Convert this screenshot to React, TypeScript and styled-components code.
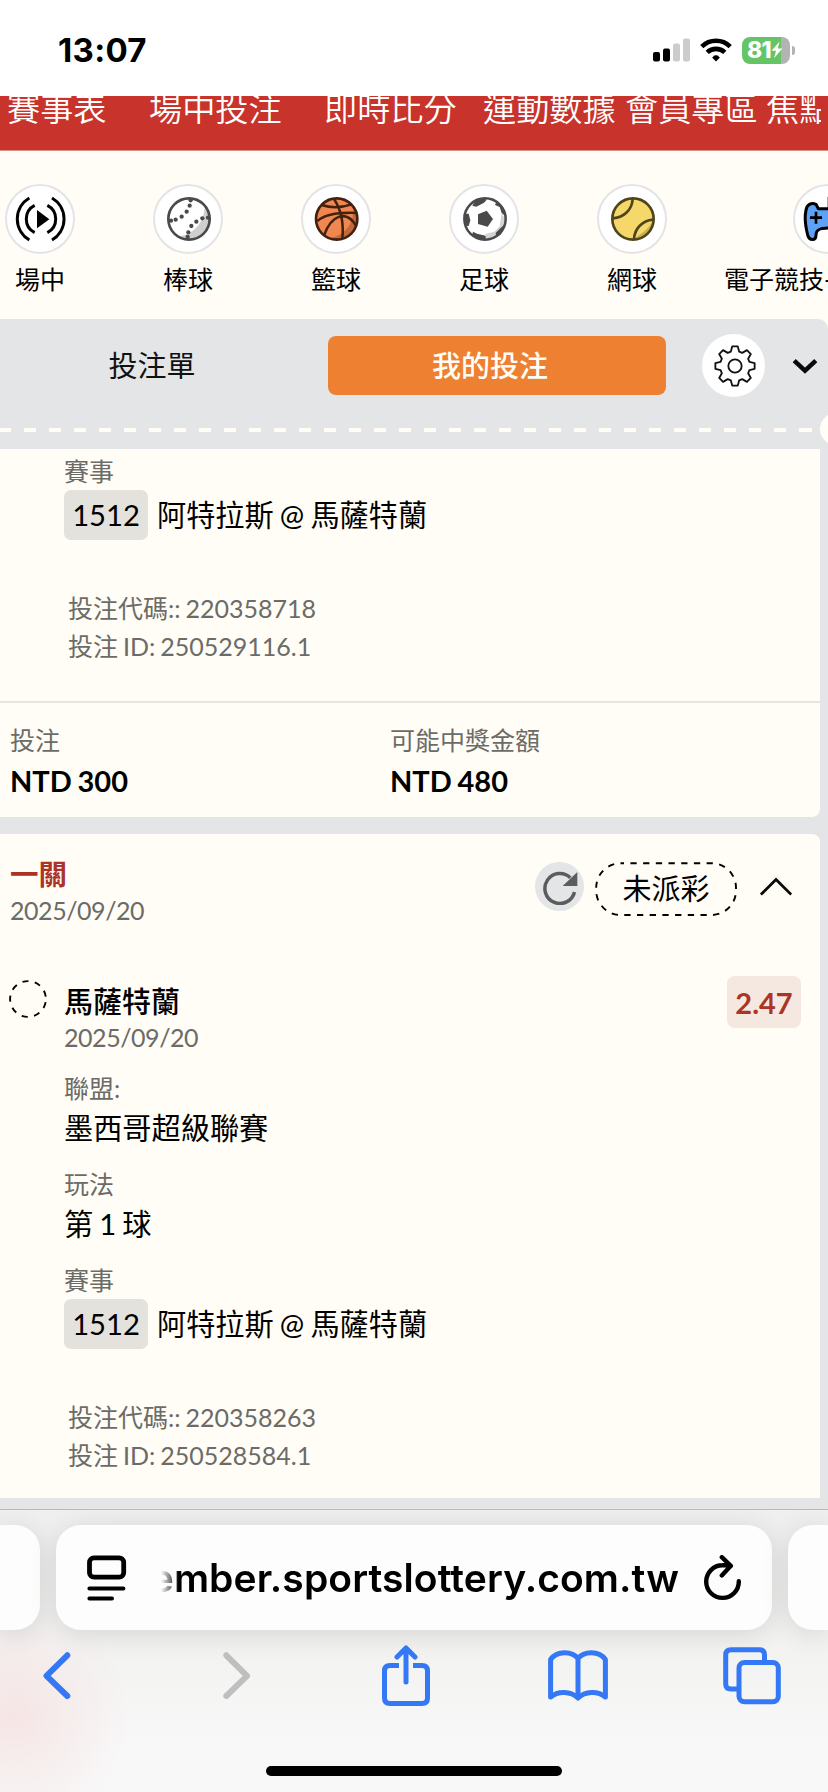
import { ReactNode } from 'react';
import styled, { createGlobalStyle } from 'styled-components';

const sans = `Lato, 'Noto Sans CJK TC', sans-serif`;

const GlobalStyle = createGlobalStyle`
  * {
    box-sizing: border-box;
  }

  body {
    margin: 0;
    background: #fffdf6;
    font-family: ${sans};
    word-spacing: -0.085em;
  }

  svg {
    display: block;
    flex-shrink: 0;
  }
`;

// ---------------------------------------------
// icons
// ---------------------------------------------
const SignalIcon = () => (
  <svg width="37" height="24" viewBox="0 0 37 24">
    <rect x="0" y="14" width="7" height="9.5" rx="2" />
    <rect x="10" y="10.5" width="7" height="13" rx="2" />
    <rect x="20" y="5.5" width="7" height="18" rx="2" fill="#ccc" />
    <rect x="30" y="0.5" width="7" height="23" rx="2" fill="#ccc" />
  </svg>
);

const WifiIcon = () => (
  <svg width="32" height="24" viewBox="0 0 32 24" fill="none" stroke="#000" strokeWidth="4.6">
    <path d="M1.8 8.6A20.3 20.3 0 0 1 30.2 8.6" />
    <path d="M7.2 14.4A12.8 12.8 0 0 1 24.8 14.4" />
    <path d="M12.1 19.4A5.9 5.9 0 0 1 19.9 19.4L16 23.4Z" fill="#000" stroke="none" />
    <path d="M14 19.4A4 4 0 0 1 18 19.4" strokeWidth="3" />
  </svg>
);

const BoltIcon = () => (
  <svg width="12" height="18" viewBox="0 0 12 18" fill="#fff">
    <path d="M8.6 0.6L0.6 9.8H5L3 17.2L11.4 7.6H6.8Z" />
  </svg>
);

const LiveIcon = () => (
  <svg width="66" height="66" viewBox="-99 -99 198 198" fill="none" stroke="#000" strokeWidth="9">
    <path d="M-32 -63A73 73 0 0 0 -32 63M-16 -41A46 46 0 0 0 -16 41M36 -63A73 73 0 0 1 36 63M22 -41A46 46 0 0 1 22 41" />
    <path d="M-9 -27V28L28 0.5Z" fill="#000" stroke="none" />
  </svg>
);

const seams = [
  [5, -56],
  [2, -40],
  [-7, -22],
  [-22, -7],
  [-40, 2],
  [-54, 5],
  [57, -4],
  [40, -2],
  [22, 8],
  [7, 21],
  [-2, 40],
  [-4, 54],
];

const BaseballIcon = () => (
  <svg width="66" height="66" viewBox="-102 -99 198 198">
    <circle r="62" fill="#fff" />
    <path d="M46 -42A62 62 0 0 1 -34 52C10 50 50 10 46 -42Z" fill="#cfcfcf" />
    {seams.map(([cx, cy]) => (
      <circle key={`${cx},${cy}`} cx={cx} cy={cy} r="6.4" fill="#4a4a4a" />
    ))}
    <circle r="62" fill="none" stroke="#4a4a4a" strokeWidth="8" />
  </svg>
);

const BasketballIcon = () => (
  <svg width="66" height="66" viewBox="-101 -99 198 198">
    <circle r="62" fill="#f08650" />
    <path d="M50 -34A62 62 0 0 1 -20 58C30 46 52 10 50 -34Z" fill="#c26a3e" />
    <g fill="none" stroke="#42220f" strokeWidth="7.5">
      <path d="M-45 -42C-15 -32 15 -34 45 -44" />
      <path d="M-8 -60C12 -30 22 10 17 59" />
      <path d="M-58 6C-30 -18 15 -20 62 -18" />
      <path d="M-38 50C-18 -10 28 -30 58 20" />
      <circle r="62" strokeWidth="8" />
    </g>
  </svg>
);

const FootballIcon = () => (
  <svg width="66" height="66" viewBox="-102 -99 198 198">
    <circle r="62" fill="#fff" />
    <path d="M50 -20L44 22L28 38L2 44L2 60L44 50L62 6Z" fill="#d4d4d4" />
    <g fill="#4a4a4a">
      <path d="M-21 -14L5 -25L24 0L8 23L-21 15Z" />
      <path d="M-38 -40L-30 -54L0 -64L4 -56L-4 -48L-26 -37Z" />
      <path d="M30 -42L34 -52L60 -24L62 -8L50 -18L44 -36Z" />
      <path d="M57 18L64 14L48 46L34 54L32 42L46 28Z" />
      <path d="M-36 38L-24 44L2 50L2 64L-26 60L-38 46Z" />
      <path d="M-64 -16L-49 -16L-44 4L-49 21L-60 20Z" />
    </g>
    <circle r="62" fill="none" stroke="#4a4a4a" strokeWidth="7.5" />
  </svg>
);

const TennisIcon = () => (
  <svg width="66" height="66" viewBox="-102 -99 198 198">
    <circle r="62" fill="#f6d76a" />
    <path d="M60 2A62 62 0 0 1 4 60C14 48 48 34 60 2Z" fill="#c9b055" />
    <g fill="none" stroke="#4d461c" strokeWidth="8">
      <path d="M-1 -60C-3 -28 -26 -5 -60 -2" />
      <path d="M3 60C5 28 28 5 60 2" />
      <circle r="62" />
    </g>
  </svg>
);

const GamepadIcon = () => (
  <svg width="66" height="66" viewBox="-99 -99 198 198" strokeLinejoin="round">
    <path
      d="M-29 -31L-36 -44C-50 -50 -64 -44 -66 -26C-70 -10 -68 20 -61 48C-56 66 -36 66 -36 48C-36 34 -28 27 0 27C28 27 36 34 36 48C36 66 56 66 61 48C68 20 70 -10 66 -26C64 -44 50 -50 36 -44L29 -31Z"
      fill="#5ea2f8"
      stroke="#000"
      strokeWidth="9"
    />
    <path d="M3 -66V-30M-54 -4H-18M-36 -22V14" stroke="#000" strokeWidth="8" />
  </svg>
);

function gearPath(teeth: number, tip: number, base: number) {
  const points: string[] = [];
  const at = (r: number, deg: number) => {
    const a = (deg * Math.PI) / 180;
    return `${(r * Math.sin(a)).toFixed(1)} ${(-r * Math.cos(a)).toFixed(1)}`;
  };
  for (let i = 0; i < teeth; i++) {
    const c = (360 / teeth) * i;
    points.push(at(base, c - 16), at(tip, c - 8), at(tip, c + 8), at(base, c + 16));
  }
  return `M${points.join('L')}Z`;
}

const GearIcon = () => (
  <svg width="44" height="44" viewBox="-66 -66 132 132" fill="none" stroke="#111" strokeWidth="5.5" strokeLinejoin="round">
    <path d={gearPath(8, 59.5, 45)} />
    <circle r="20" />
  </svg>
);

const ChevronDownIcon = () => (
  <svg width="26" height="16" viewBox="0 0 26 16" fill="none" stroke="#0a0a0a" strokeWidth="4.5">
    <path d="M2.2 2.6L13 12.6L23.8 2.6" />
  </svg>
);

const ChevronUpIcon = () => (
  <svg width="32" height="20" viewBox="0 0 32 20" fill="none" stroke="#0a0a0a" strokeWidth="2.8">
    <path d="M0.8 17.6L16 2.4L31.2 17.6" />
  </svg>
);

const RetryIcon = () => (
  <svg width="36" height="36" viewBox="-54 -54 108 108">
    <path d="M43.5 15A45 45 0 1 1 31 -28" fill="none" stroke="#5b5c5e" strokeWidth="10.5" />
    <path d="M52 -45V-3H8Z" fill="#5b5c5e" />
  </svg>
);

const PendingIcon = () => (
  <svg width="38" height="38" viewBox="-19 -19 38 38">
    <circle r="17.9" fill="none" stroke="#000" strokeWidth="1.9" strokeDasharray="6.1 6.4" strokeDashoffset="-3.2" />
  </svg>
);

const PageMenuIcon = () => (
  <svg width="40" height="46" viewBox="0 0 40 46" fill="none" stroke="#000" strokeLinecap="round">
    <rect x="2.5" y="2.8" width="34.2" height="19.4" rx="4.5" strokeWidth="4.8" />
    <path d="M2.4 33.5H36.4M2.4 43.6H25" strokeWidth="4" />
  </svg>
);

const ReloadIcon = () => (
  <svg width="38" height="46" viewBox="0 0 38 46" fill="none" stroke="#000" strokeWidth="4.4" strokeLinecap="round" strokeLinejoin="round">
    <path d="M34.8 26.3A16.3 16.3 0 1 1 18.5 10.3C22 10.2 24.5 10.4 26.5 11" />
    <path d="M17.8 2.2L26.8 10.8L17.8 20.4" />
  </svg>
);

const BackIcon = () => (
  <svg width="28" height="48" viewBox="0 0 28 48" fill="none" stroke="currentColor" strokeWidth="6" strokeLinecap="round" strokeLinejoin="round">
    <path d="M24.3 3.3L3.5 23.8L24.3 44" />
  </svg>
);

const ForwardIcon = () => (
  <svg width="40" height="48" viewBox="-12 0 40 48" fill="none" stroke="currentColor" strokeWidth="6" strokeLinecap="round" strokeLinejoin="round">
    <path d="M3.3 3.3L24 23.8L3.3 44" />
  </svg>
);

const ShareIcon = () => (
  <svg width="50" height="62" viewBox="-2 0 50 62" fill="none" stroke="currentColor" strokeWidth="5">
    <path d="M17 20.5H8Q2.5 20.5 2.5 26V53Q2.5 58.5 8 58.5H40Q45.5 58.5 45.5 53V26Q45.5 20.5 40 20.5H31" />
    <path d="M24 3.5V37M15 12L24 3L33 12" strokeLinecap="round" strokeLinejoin="round" />
  </svg>
);

const BookIcon = () => (
  <svg width="60" height="52" viewBox="0 0 60 52" fill="none" stroke="currentColor" strokeWidth="5" strokeLinejoin="round">
    <path d="M30 48V8.5C24 1 9 0.5 2.6 9.5V47C10 40.5 23 41 30 48ZM30 8.5C36 1 51 0.5 57.4 9.5V47C50 40.5 37 41 30 48" />
  </svg>
);

const TabsIcon = () => (
  <svg width="58" height="58" viewBox="0 0 58 58" fill="none" stroke="currentColor" strokeWidth="5">
    <path d="M41.5 15V8Q41.5 2.8 36.5 2.8H8Q2.7 2.8 2.7 8V37Q2.7 42 8 42H15" />
    <rect x="16" y="15.5" width="39.3" height="39.3" rx="5.5" />
  </svg>
);

// ---------------------------------------------
// status bar
// ---------------------------------------------
const Screen = styled.div`
  display: flex;
  flex-direction: column;
  width: 828px;
  height: 1792px;
  overflow: hidden;
  background: #fffdf6;
  color: #000;
`;

const StatusBar = styled.div`
  display: flex;
  align-items: center;
  height: 96px;
  padding: 4px 33px 0 58px;
  background: #fff;
`;

const Clock = styled.span`
  flex: 1;
  font: 700 33px/36px Inter, sans-serif;
  letter-spacing: 0.3px;
`;

const StatusIcons = styled.div`
  display: flex;
  align-items: center;
  gap: 10px;
`;

const Battery = styled.div`
  display: flex;
  align-items: center;
  gap: 2px;

  &::after {
    content: '';
    width: 3px;
    height: 9px;
    border-radius: 0 4px 4px 0;
    background: #b3b3b3;
  }
`;

const BatteryBody = styled.div`
  display: flex;
  align-items: center;
  width: 48px;
  height: 27px;
  padding-left: 5px;
  border-radius: 8px;
  background: linear-gradient(90deg, #65c466 39px, #b3b3b3 39px);
  color: #fff;
  font: 800 23px/27px Inter, sans-serif;
  letter-spacing: -0.8px;
`;

// ---------------------------------------------
// site navigation
// ---------------------------------------------
const SiteNav = styled.nav`
  display: flex;
  height: 55px;
  padding-left: 7px;
  overflow: hidden;
  border-bottom: 1px solid #e08e86;
  background: #c8332b;
  color: #fff;
  font-size: 33.2px;
  font-weight: 350;
  line-height: 40px;
  white-space: nowrap;
`;

const NavItem = styled.span<{ $width: number }>`
  flex: 0 0 ${({ $width }) => $width}px;
  height: 54px;
  margin-top: -8px;
  overflow: hidden;
`;

const Sports = styled.div`
  display: flex;
  gap: 78px;
  height: 168px;
  padding: 33px 0 0 5px;
`;

const Sport = styled.div<{ $wide?: boolean }>`
  display: flex;
  flex-direction: column;
  align-items: center;
  flex: 0 0 ${({ $wide }) => ($wide ? 207 : 70)}px;
  gap: 10px;
  margin-left: ${({ $wide }) => ($wide ? -21 : 0)}px;
  font-size: 25px;
  line-height: 30px;
  white-space: nowrap;
`;

const SportCircle = styled.div`
  width: 70px;
  height: 70px;
  border: 2px solid #e4e4e6;
  border-radius: 50%;
  background: #fff;
`;

const SportName = styled.span<{ $wide?: boolean }>`
  align-self: ${({ $wide }) => ($wide ? 'flex-start' : 'center')};
`;

// ---------------------------------------------
// bet slip
// ---------------------------------------------
const Slip = styled.section`
  flex: 1;
  min-height: 0;
  overflow: hidden;
  border-top-right-radius: 10px;
  background: #e4e5e7;
`;

const Tabs = styled.div`
  display: flex;
  align-items: center;
  height: 93px;
  padding-right: 10px;
`;

const Tab = styled.button<{ $active?: boolean }>`
  width: ${({ $active }) => ($active ? 338 : 304)}px;
  height: 59px;
  margin-right: ${({ $active }) => ($active ? 36 : 24)}px;
  padding: 0 ${({ $active }) => ($active ? 14 : 0)}px 0 0;
  border: 0;
  border-radius: 8px;
  background: ${({ $active }) => ($active ? '#ee8131' : 'transparent')};
  color: ${({ $active }) => ($active ? '#fffdf6' : '#111')};
  font: ${({ $active }) => ($active ? 500 : 400)} 29px/59px ${sans};
`;

const SettingsButton = styled.button`
  display: flex;
  align-items: center;
  justify-content: center;
  width: 63px;
  height: 63px;
  margin-right: 27px;
  padding: 0 0 0 2px;
  border: 0;
  border-radius: 50%;
  background: #fff;
`;

const TearLine = styled.div`
  display: flex;
  align-items: center;
  justify-content: space-between;
  height: 37px;
  padding-bottom: 1px;
  overflow: hidden;

  &::before {
    content: '';
    width: 812px;
    height: 4px;
    background: repeating-linear-gradient(90deg, #fffdf6 0 12.5px, transparent 12.5px 25px) -1px 0;
  }

  &::after {
    content: '';
    width: 32px;
    height: 32px;
    margin: -3px -24px 0 0;
    border-radius: 50%;
    background: #fffdf6;
  }
`;

const Card = styled.article<{ $cut: 'top' | 'bottom' }>`
  width: 820px;
  margin-bottom: 17px;
  padding-top: ${({ $cut }) => ($cut === 'top' ? 3 : 0)}px;
  border-radius: ${({ $cut }) => ($cut === 'top' ? '0 0 8px 0' : '0 8px 0 0')};
  background: #fffdf6;
`;

const CardHeader = styled.header`
  display: flex;
  align-items: flex-start;
  height: 149px;
  padding: 22px 28px 0 10px;
`;

const Heading = styled.div`
  flex: 1;
`;

const BetType = styled.h2`
  margin: 0;
  color: #ab3427;
  font-size: 28.5px;
  font-weight: 700;
  line-height: 37px;
`;

const DateText = styled.div`
  color: #6b6b68;
  font-size: 25px;
  letter-spacing: -0.45px;
  line-height: 34px;
`;

const RetryButton = styled.button`
  display: flex;
  align-items: center;
  justify-content: center;
  width: 49px;
  height: 49px;
  margin: 6px 11px 0 0;
  padding: 0;
  border: 0;
  border-radius: 50%;
  background: #e4e5e7;
`;

const Status = styled.div`
  position: relative;
  width: 142px;
  height: 54px;
  margin: 6px 23px 0 0;
  font-size: 29px;
  line-height: 54px;
  text-align: center;

  svg {
    position: absolute;
    inset: 0;
  }
`;

const ToggleButton = styled.button`
  padding: 0;
  margin-top: 21px;
  border: 0;
  background: none;
`;

const Selection = styled.div`
  display: flex;
  align-items: flex-start;
  height: 86px;
  padding: 0 19px 0 9px;
`;

const SelectionText = styled.div`
  flex: 1;
  padding-left: 17px;

  ${DateText} {
    line-height: 35px;
  }
`;

const PendingMark = styled.div`
  margin-top: -3px;
`;

const SelectionName = styled.div`
  font-size: 29px;
  font-weight: 500;
  line-height: 37px;
`;

const Odds = styled.div`
  width: 74px;
  height: 52px;
  margin-top: -7px;
  border-radius: 8px;
  background: #f4e8e0;
  color: #ab3427;
  font-size: 29px;
  font-weight: 700;
  line-height: 53px;
  text-align: center;
`;

const Fields = styled.dl`
  margin: 0;
  padding-left: 64px;
`;

const Label = styled.dt`
  color: #6b6b68;
  font-size: 25px;
  line-height: 38px;
`;

const Value = styled.dd`
  height: 58px;
  margin: 0;
  font-size: 29.2px;
  line-height: 42px;
`;

const Match = styled.dd`
  display: flex;
  gap: 9px;
  margin: 0;
  font-size: 29.2px;
  line-height: 50px;
`;

const MatchNumber = styled.span`
  width: 84px;
  border-radius: 7px;
  background: #e4e2dd;
  text-align: center;
`;

const Codes = styled.div<{ $bottom: number }>`
  padding: 50px 0 ${({ $bottom }) => $bottom}px 68px;
  color: #6b6b68;
  font-size: 25px;
  line-height: 37.5px;
`;

const Totals = styled.footer`
  display: grid;
  grid-template-columns: 380px 1fr;
  padding: 18px 0 15px 10px;
  border-top: 2px solid #e5e6e3;
`;

const TotalLabel = styled.div`
  color: #6b6b68;
  font-size: 25px;
  line-height: 38px;
`;

const Amount = styled.div`
  font-size: 29px;
  font-weight: 700;
  line-height: 43px;
`;

// ---------------------------------------------
// browser chrome
// ---------------------------------------------
const Browser = styled.div`
  display: flex;
  flex-direction: column;
  height: 283px;
  overflow: hidden;
  border-top: 1px solid #b9bab9;
  background:
    radial-gradient(circle at 14px 206px, #f6e5e5 0, rgba(246, 229, 229, 0) 115px),
    linear-gradient(#efefef, #f3f3f2 150px, #f8f8f8 240px);
`;

const AddressRow = styled.div`
  display: flex;
  gap: 16px;
  height: 121px;
  padding-top: 15px;
`;

const AddressBar = styled.div`
  display: flex;
  align-items: center;
  flex: 0 0 716px;
  height: 105px;
  padding: 0 29px 0 31px;
  border-radius: 25px;
  background: #fdfdfd;
  box-shadow: 0 4px 28px rgba(0, 0, 0, 0.12);
`;

const SideTab = styled.div<{ $side: 'left' | 'right' }>`
  flex: 0 0 40px;
  height: 105px;
  border-radius: ${({ $side }) => ($side === 'left' ? '0 25px 25px 0' : '25px 0 0 25px')};
  background: #fdfdfd;
  box-shadow: 0 4px 28px rgba(0, 0, 0, 0.12);
`;

const Url = styled.div`
  display: flex;
  justify-content: flex-end;
  width: 518px;
  margin: 0 25px 0 34px;
  overflow: hidden;
  font: 600 39px/60px Inter, sans-serif;
  letter-spacing: 0.1px;
  mask-image: linear-gradient(90deg, transparent, #000 18px);
`;

const Toolbar = styled.div`
  display: flex;
  align-items: center;
  justify-content: space-between;
  height: 62px;
  margin-top: 14px;
  padding: 0 47px 0 28px;
  color: #3478f6;
`;

const ToolButton = styled.span<{ $disabled?: boolean }>`
  display: flex;
  justify-content: center;
  width: 58px;
  color: ${({ $disabled }) => ($disabled ? '#bfbfbf' : 'inherit')};
`;

const HomeIndicator = styled.div`
  width: 296px;
  height: 10px;
  margin: 59px auto 0;
  border-radius: 5px;
  background: #000;
`;

// ---------------------------------------------
// page
// ---------------------------------------------
const navItems = [
  { label: '賽事表', width: 142 },
  { label: '場中投注', width: 175 },
  { label: '即時比分', width: 159 },
  { label: '運動數據', width: 142 },
  { label: '會員專區', width: 141 },
  { label: '焦點', width: 55 },
];

interface SportItem {
  name: string;
  icon: ReactNode;
  wide?: boolean;
}

const sports: SportItem[] = [
  { name: '場中', icon: <LiveIcon /> },
  { name: '棒球', icon: <BaseballIcon /> },
  { name: '籃球', icon: <BasketballIcon /> },
  { name: '足球', icon: <FootballIcon /> },
  { name: '網球', icon: <TennisIcon /> },
  { name: '電子競技-', icon: <GamepadIcon />, wide: true },
];

interface MatchFieldProps {
  number: string;
  teams: string;
}

function MatchField({ number, teams }: MatchFieldProps) {
  return (
    <>
      <Label>賽事</Label>
      <Match>
        <MatchNumber>{number}</MatchNumber>
        <span>{teams}</span>
      </Match>
    </>
  );
}

interface BetCodesProps {
  code: string;
  id: string;
  bottom: number;
}

function BetCodes({ code, id, bottom }: BetCodesProps) {
  return (
    <Codes $bottom={bottom}>
      <div>投注代碼:: {code}</div>
      <div>投注 ID: {id}</div>
    </Codes>
  );
}

export default function App() {
  return (
    <Screen>
      <GlobalStyle />
      <StatusBar>
        <Clock>13:07</Clock>
        <StatusIcons>
          <SignalIcon />
          <WifiIcon />
          <Battery>
            <BatteryBody>
              81
              <BoltIcon />
            </BatteryBody>
          </Battery>
        </StatusIcons>
      </StatusBar>

      <SiteNav>
        {navItems.map(({ label, width }) => (
          <NavItem key={label} $width={width}>
            {label}
          </NavItem>
        ))}
      </SiteNav>

      <Sports>
        {sports.map(({ name, icon, wide }) => (
          <Sport key={name} $wide={wide}>
            <SportCircle>{icon}</SportCircle>
            <SportName $wide={wide}>{name}</SportName>
          </Sport>
        ))}
      </Sports>

      <Slip>
        <Tabs>
          <Tab>投注單</Tab>
          <Tab $active>我的投注</Tab>
          <SettingsButton>
            <GearIcon />
          </SettingsButton>
          <ChevronDownIcon />
        </Tabs>
        <TearLine />

        <Card $cut="top">
          <Fields>
            <MatchField number="1512" teams="阿特拉斯 @ 馬薩特蘭" />
          </Fields>
          <BetCodes code="220358718" id="250529116.1" bottom={36} />
          <Totals>
            <div>
              <TotalLabel>投注</TotalLabel>
              <Amount>NTD 300</Amount>
            </div>
            <div>
              <TotalLabel>可能中獎金額</TotalLabel>
              <Amount>NTD 480</Amount>
            </div>
          </Totals>
        </Card>

        <Card $cut="bottom">
          <CardHeader>
            <Heading>
              <BetType>一關</BetType>
              <DateText>2025/09/20</DateText>
            </Heading>
            <RetryButton>
              <RetryIcon />
            </RetryButton>
            <Status>
              <svg width="142" height="54" viewBox="0 0 142 54">
                <rect
                  x="1.2"
                  y="1.2"
                  width="139.8"
                  height="51.8"
                  rx="24.5"
                  fill="none"
                  stroke="#000"
                  strokeWidth="1.9"
                  strokeDasharray="6.3 6.4"
                  strokeDashoffset="3"
                />
              </svg>
              未派彩
            </Status>
            <ToggleButton>
              <ChevronUpIcon />
            </ToggleButton>
          </CardHeader>
          <Selection>
            <PendingMark>
              <PendingIcon />
            </PendingMark>
            <SelectionText>
              <SelectionName>馬薩特蘭</SelectionName>
              <DateText>2025/09/20</DateText>
            </SelectionText>
            <Odds>2.47</Odds>
          </Selection>
          <Fields>
            <Label>聯盟:</Label>
            <Value>墨西哥超級聯賽</Value>
            <Label>玩法</Label>
            <Value>第 1 球</Value>
            <MatchField number="1512" teams="阿特拉斯 @ 馬薩特蘭" />
          </Fields>
          <BetCodes code="220358263" id="250528584.1" bottom={24} />
        </Card>
      </Slip>

      <Browser>
        <AddressRow>
          <SideTab $side="left" />
          <AddressBar>
            <PageMenuIcon />
            <Url>ember.sportslottery.com.tw</Url>
            <ReloadIcon />
          </AddressBar>
          <SideTab $side="right" />
        </AddressRow>
        <Toolbar>
          <ToolButton>
            <BackIcon />
          </ToolButton>
          <ToolButton $disabled>
            <ForwardIcon />
          </ToolButton>
          <ToolButton>
            <ShareIcon />
          </ToolButton>
          <ToolButton>
            <BookIcon />
          </ToolButton>
          <ToolButton>
            <TabsIcon />
          </ToolButton>
        </Toolbar>
        <HomeIndicator />
      </Browser>
    </Screen>
  );
}
